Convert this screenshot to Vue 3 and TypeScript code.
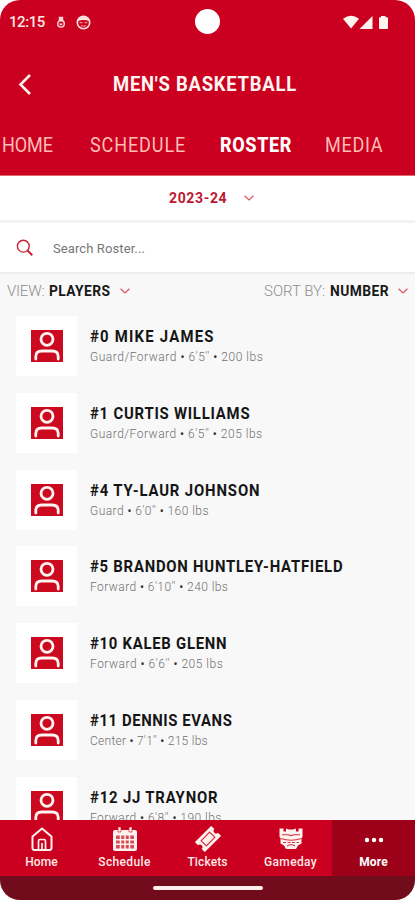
<script setup lang="ts">
interface Player {
  title: string
  meta: string[]
  nameTracking: number
  metaTracking: number
}

interface Tab {
  label: string
  active: boolean
}

const tabs: Tab[] = [
  { label: 'HOME', active: false },
  { label: 'SCHEDULE', active: false },
  { label: 'ROSTER', active: true },
  { label: 'MEDIA', active: false },
]

const players: Player[] = [
  { title: '#0 MIKE JAMES', meta: ['Guard/Forward', "6'5''", '200 lbs'], nameTracking: 1.33, metaTracking: 0.52 },
  { title: '#1 CURTIS WILLIAMS', meta: ['Guard/Forward', "6'5''", '205 lbs'], nameTracking: 0.84, metaTracking: 0.5 },
  { title: '#4 TY-LAUR JOHNSON', meta: ['Guard', "6'0''", '160 lbs'], nameTracking: 0.93, metaTracking: 0.44 },
  { title: '#5 BRANDON HUNTLEY-HATFIELD', meta: ['Forward', "6'10''", '240 lbs'], nameTracking: 0.82, metaTracking: 0.43 },
  { title: '#10 KALEB GLENN', meta: ['Forward', "6'6''", '205 lbs'], nameTracking: 0.79, metaTracking: 0.51 },
  { title: '#11 DENNIS EVANS', meta: ['Center', "7'1''", '215 lbs'], nameTracking: 0.63, metaTracking: 0.26 },
  { title: '#12 JJ TRAYNOR', meta: ['Forward', "6'8''", '190 lbs'], nameTracking: 0.89, metaTracking: 0.45 },
]
</script>

<template>
  <div class="screen">
    <header class="header">
      <div class="status">
        <span class="clock">12:15</span>
        <svg class="st-medal" viewBox="0 0 10 13" width="10" height="13" fill="none" stroke="#ffd9d6" stroke-width="1.4">
          <path d="M3.500 1.500h3v3h-3z" fill="#ffd9d6" /><circle cx="5" cy="7.800" r="3.300" /><path d="M3.600 7.500L5 9L6.400 7.500" stroke-width="1.100" />
        </svg>
        <svg class="st-face" viewBox="0 0 15 15" width="15" height="15">
          <circle cx="7.500" cy="7.500" r="6.200" fill="none" stroke="#ffe3df" stroke-width="1.600" />
          <path d="M1.600 6Q3 1.600 7.500 1.400Q12 1.600 13.400 6Q7.500 4 1.600 6z" fill="#ffe3df" />
          <path d="M3.600 7.600h3M8.400 7.600h3M5 10.400q2.500 1.600 5 0" fill="none" stroke="#f08a8c" stroke-width="1.200" />
        </svg>
        <i class="camera"></i>
        <svg class="st-right" viewBox="0 0 46 15" width="46" height="15" fill="#fff4ee">
          <path d="M0 3.800Q8 -2.400 16 3.800L8 13.500z" />
          <path d="M29.500 1v13h-13z" />
          <path d="M38 1h4.500v1.300h1.500q1 0 1 1v9.700q0 1-1 1h-7q-1 0-1-1V3.300q0-1 1-1h1z" />
        </svg>
      </div>
      <div class="titlebar">
        <svg class="back" viewBox="0 0 14 22" width="14" height="22" fill="none" stroke="#fff3ee" stroke-width="2.600">
          <path d="M12 2L2.500 11.500L12 21" />
        </svg>
        <h1>MEN'S BASKETBALL</h1>
      </div>
      <nav class="tabs">
        <span v-for="t in tabs" :key="t.label" :class="['tab', t.label.toLowerCase(), { active: t.active }]">{{ t.label }}</span>
      </nav>
    </header>

    <div class="season">
      <span>2023-24</span>
      <svg class="chev" viewBox="0 0 10 6" width="10" height="6"><path d="M.6.8L5 5L9.400.8" /></svg>
    </div>

    <div class="search">
      <svg viewBox="0 0 18 18" width="18" height="18" fill="none" stroke="#cb1f33">
        <circle cx="7.300" cy="7.200" r="5.900" stroke-width="1.400" /><path d="M11.600 11.600L16.300 16.300" stroke-width="2" />
      </svg>
      <span>Search Roster...</span>
    </div>

    <div class="filters">
      <span class="light view">VIEW:</span><span class="value players">PLAYERS</span>
      <svg class="chev" viewBox="0 0 10 6" width="10" height="6"><path d="M.6.8L5 5L9.400.8" /></svg>
      <span class="light sort">SORT BY:</span><span class="value number">NUMBER</span>
      <svg class="chev" viewBox="0 0 10 6" width="10" height="6"><path d="M.6.8L5 5L9.400.8" /></svg>
    </div>

    <main class="list">
      <article v-for="p in players" :key="p.title" class="player">
        <div class="avatar">
          <svg viewBox="0 0 32 32" width="32" height="32">
            <path d="M0 0h32v32H0z" fill="#cb0a20" />
            <g fill="none" stroke="#fff4f2" stroke-width="2.800" stroke-linecap="round">
              <circle cx="16" cy="9.300" r="6" />
              <path d="M4.800 29V26.500q0-5.500 6-5.500h10.400q6 0 6 5.500V29" />
            </g>
          </svg>
        </div>
        <div class="info">
          <div class="name"><span :style="{ letterSpacing: p.nameTracking + 'px' }">{{ p.title }}</span></div>
          <div class="meta"><span :style="{ letterSpacing: p.metaTracking + 'px' }">{{ p.meta[0] }} <b>•</b> {{ p.meta[1] }} <b>•</b> {{ p.meta[2] }}</span></div>
        </div>
      </article>
    </main>

    <footer class="bottom">
      <div class="item">
        <svg viewBox="0 0 24 26" width="24" height="26" fill="none" stroke="#fff1ed" stroke-width="2" stroke-linejoin="round">
          <path d="M2.500 10.500L12 2.500L21.500 10.500V22q0 2-2 2h-15q-2 0-2-2z" /><path d="M8.500 24v-9q0-1.500 1.500-1.500h4q1.500 0 1.500 1.500v9M12 17v7" stroke-width="1.700" />
        </svg>
        <span>Home</span>
      </div>
      <div class="item">
        <svg viewBox="0 0 26 26" width="26" height="26">
          <path d="M3 4h20q2 0 2 2v17q0 2-2 2H3q-2 0-2-2V6q0-2 2-2z" fill="#fff1ed" />
          <path d="M6 1h3v5H6zM17 1h3v5h-3z" fill="#fff1ed" stroke="#cb0020" stroke-width=".6" />
          <path d="M4 9.500h18v13H4z" fill="#d64b55" />
          <path d="M8.500 9v14M13 9v14M17.500 9v14M4 13.800h18M4 18.200h18" stroke="#fff1ed" stroke-width="1.500" />
        </svg>
        <span class="lab-schedule">Schedule</span>
      </div>
      <div class="item">
        <svg viewBox="0 0 26 26" width="26" height="26">
          <g transform="rotate(-45 13 13)">
            <path d="M1.500 6h23v4.500a2.500 2.500 0 0 0 0 5V20h-23v-4.500a2.500 2.500 0 0 0 0-5z" fill="#fff1ed" />
            <path d="M7 9.300h12v7.400H7z" fill="none" stroke="#d63a48" stroke-width="1.200" />
          </g>
        </svg>
        <span>Tickets</span>
      </div>
      <div class="item">
        <svg viewBox="0 0 26 26" width="26" height="26">
          <path d="M1.500 2.500h4v3h2.500v-3l3 1h4l3-1v3h2.500v-3h4v8l-1 2v5l-3.500 2-2 3.500h-10l-2-3.500-3.500-2v-5l-1-2z" fill="#fff1ed" />
          <path d="M4 8.800h6l3 .8 3-.8h6M2.500 12.500q10.500 3.500 21 0M9 20q4-2.500 8 0" fill="none" stroke="#d33343" stroke-width="1.100" />
          <path d="M5 16.500h16" stroke="#d33343" stroke-width="1" stroke-dasharray="3 1.500" />
        </svg>
        <span class="lab-gameday">Gameday</span>
      </div>
      <div class="item more">
        <svg viewBox="0 0 26 26" width="26" height="26" fill="#fff"><circle cx="6" cy="14" r="2.200" /><circle cx="13" cy="14" r="2.200" /><circle cx="20" cy="14" r="2.200" /></svg>
        <span>More</span>
      </div>
    </footer>
    <div class="gesture"><i></i></div>
  </div>
</template>

<style>
body { margin: 0; background: #fff; }
</style>

<style scoped>
.screen { width: 415px; height: 900px; display: flex; flex-direction: column; overflow: hidden; border-radius: 20px; background: #f8f8f8; font-family: Roboto, "Liberation Sans", sans-serif; white-space: nowrap; }
svg { display: block; flex: none; }
.header { flex: none; box-sizing: border-box; height: 176px; background: #cb0020; border-bottom: 1px solid #e66a72; }
.status { position: relative; display: flex; align-items: center; height: 44px; padding-left: 9px; }
.clock { width: 46px; color: #ffe5e0; font-size: 15px; font-weight: 500; letter-spacing: -.45px; }
.st-medal { margin-left: 1px; }
.st-face { margin-left: 10px; }
.camera { position: absolute; left: 195px; top: 9px; width: 25px; height: 25px; border-radius: 50%; background: #fff; }
.st-right { margin-left: auto; margin-right: 26px; }
.titlebar { display: flex; align-items: center; height: 80px; padding-left: 18px; }
h1 { margin: 0 0 0 81px; color: #fff5f1; font-size: 20.500px; font-weight: 700; letter-spacing: .840px; transform: scaleX(.9); transform-origin: left; }
.tabs { display: flex; align-items: center; height: 42px; color: #ffbdb6; font-size: 20.500px; font-weight: 400; }
.tab { flex: none; transform: scaleX(.88); transform-origin: left; }
.home { width: 88px; margin-left: 2px; letter-spacing: -.1px; }
.schedule { width: 130px; letter-spacing: 1px; }
.roster { width: 105px; color: #fff; font-weight: 800; letter-spacing: .7px; }
.media { letter-spacing: .8px; }
.season { flex: none; display: flex; align-items: center; height: 44px; padding-left: 169px; gap: 17px; background: #fff; border-bottom: 3px solid #f3f3f3; color: #bd1830; font-size: 14px; font-weight: 700; letter-spacing: .650px; }
.chev { fill: none; stroke: #d6535f; stroke-width: 1.200; }
.search { flex: none; display: flex; align-items: center; height: 49px; padding-left: 16px; gap: 19px; background: #fff; border-bottom: 2px solid #ececec; color: #777; font-size: 13px; letter-spacing: .1px; }
.search span { margin-top: 2px; }
.filters { flex: none; display: flex; align-items: center; height: 34px; padding: 0 7px; font-size: 15px; }
.light { color: #8d8d8d; font-weight: 300; }
.view { width: 42px; letter-spacing: -.2px; }
.value { color: #181818; font-weight: 700; transform: scaleX(.92); transform-origin: left; }
.players { width: 71px; letter-spacing: .45px; }
.sort { margin-left: auto; width: 66px; }
.number { width: 68px; letter-spacing: .5px; }
.list { flex: 1; min-height: 0; overflow: hidden; padding: 8px 0 0 16px; }
.player { display: flex; height: 76.800px; gap: 13px; }
.avatar { flex: none; width: 61px; height: 60px; display: flex; align-items: center; justify-content: center; background: #fff; }
.info { padding-top: 10px; }
.name { height: 22px; line-height: 22px; color: #151515; font-size: 16px; font-weight: 700; transform: scaleX(.93); transform-origin: left; width: 300px; }
.meta { height: 18px; line-height: 18px; color: #707070; font-size: 12px; font-weight: 300; }
.meta b { color: #333; font-weight: 400; }
.bottom { flex: none; display: grid; grid-template-columns: repeat(5, 83px); height: 56px; background: #cb0020; color: #ffe9e4; font-size: 12px; font-weight: 500; }
.item { display: flex; flex-direction: column; align-items: center; padding-top: 6px; }
.item svg { height: 26px; }
.item span { line-height: 18px; margin-top: 1px; letter-spacing: .1px; }
.item .lab-schedule { letter-spacing: .350px; }
.item .lab-gameday { letter-spacing: .350px; }
.more { background: #9d0019; color: #fff; font-weight: 700; }
.gesture { flex: none; height: 24px; background: #700c1c; display: flex; justify-content: center; align-items: center; }
.gesture i { width: 110px; height: 4px; border-radius: 2px; background: #fff0ed; }
</style>
